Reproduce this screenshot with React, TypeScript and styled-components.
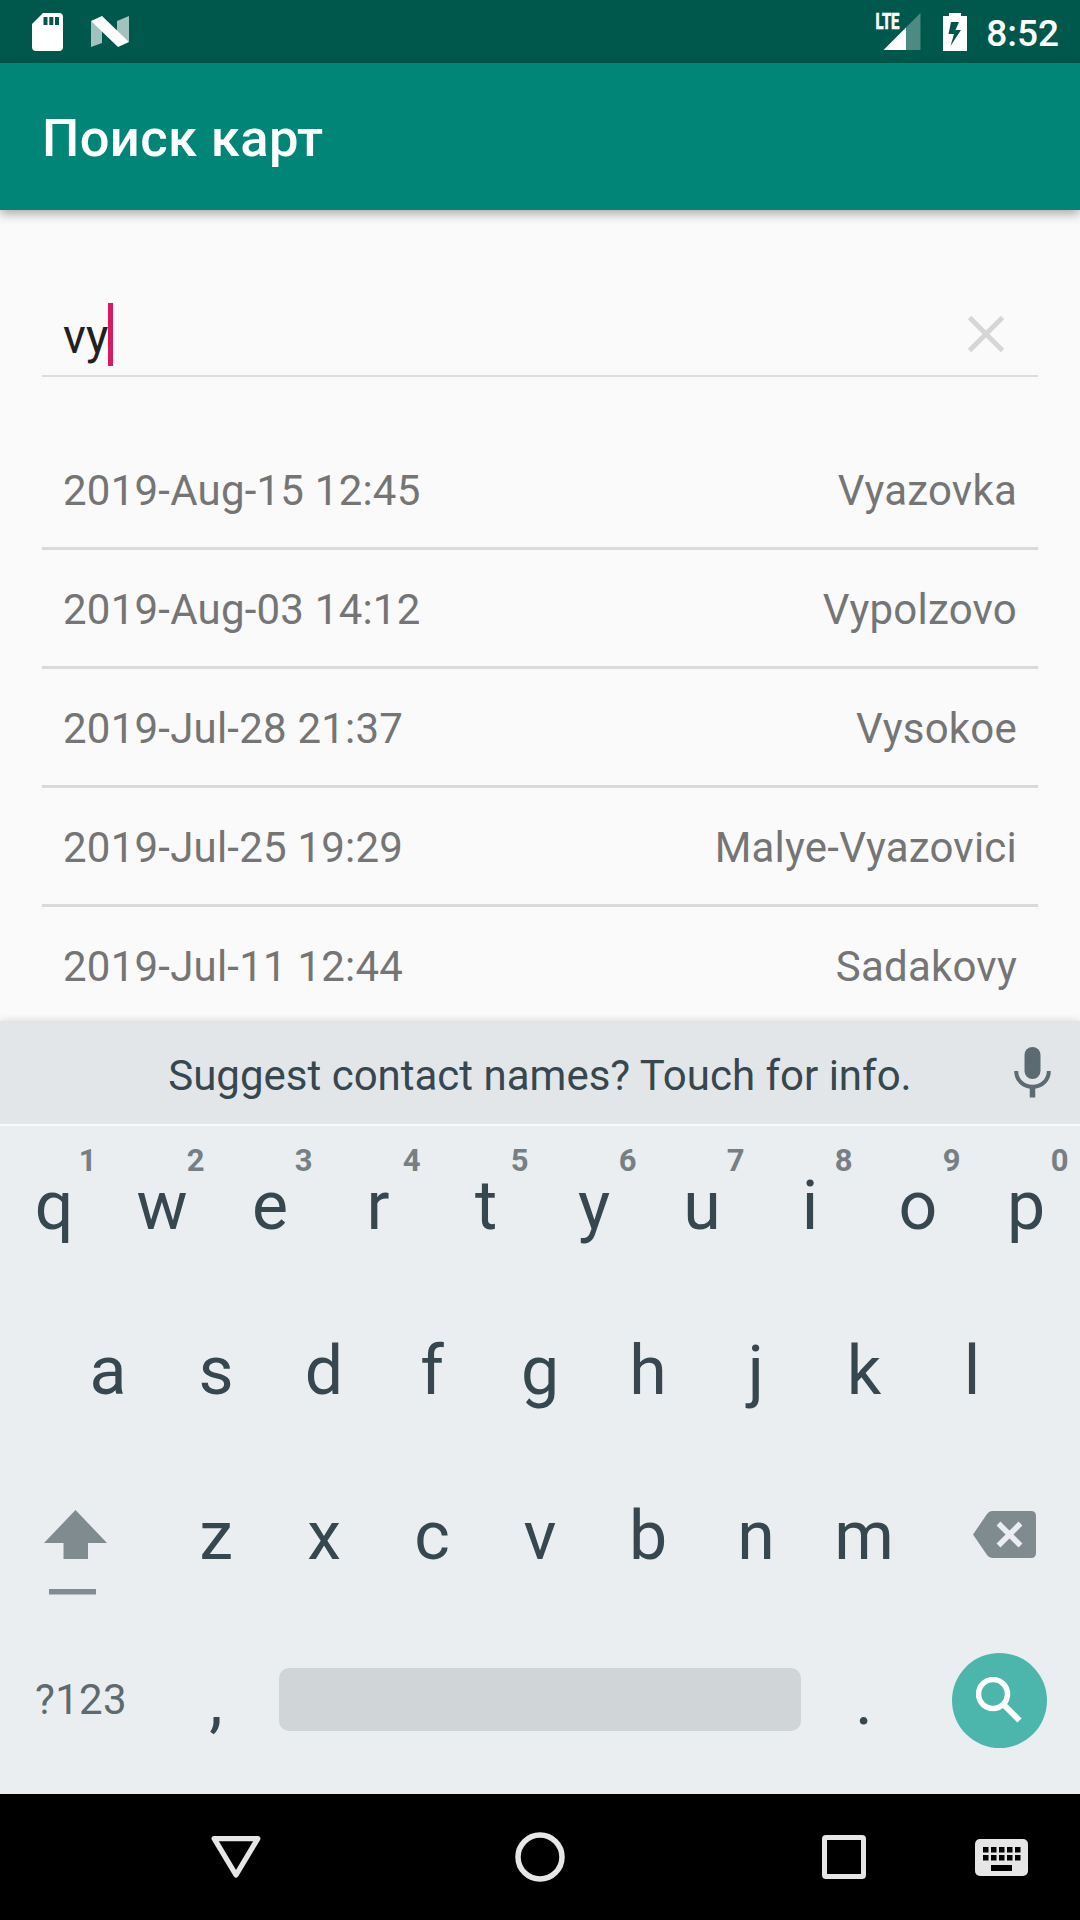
import React from "react";
import styled, { createGlobalStyle } from "styled-components";

const Global = createGlobalStyle`
  * { box-sizing: border-box; }
  body { margin: 0; background: #fafafa; font-family: Roboto, "Noto Sans", sans-serif; }
`;

const Screen = styled.div`
  width: 1080px;
  height: 1920px;
  display: flex;
  flex-direction: column;
  overflow: hidden;
  background: #fafafa;
`;

const StatusBar = styled.header`
  height: 63px;
  flex: none;
  display: flex;
  align-items: center;
  justify-content: space-between;
  padding: 0 21px 0 32px;
  background: #00574b;
`;

const StatusGroup = styled.div<{ $gap: number }>`
  display: flex;
  align-items: center;
  gap: ${(p) => p.$gap}px;
`;

const Clock = styled.span`
  margin-left: -3px;
  font-size: 37px;
  font-weight: 500;
  line-height: 43px;
  color: #fff;
  padding-top: 3px;
`;

const AppBar = styled.div`
  height: 147px;
  flex: none;
  display: flex;
  align-items: center;
  padding: 2px 42px 0;
  background: #008577;
  box-shadow: 0 4px 10px rgba(0, 0, 0, 0.32);
  z-index: 1;
`;

const Title = styled.h1`
  margin: 0;
  font-size: 52.5px;
  font-weight: 500;
  line-height: 62px;
  letter-spacing: 0.38px;
  color: #fff;
`;

const Content = styled.main`
  height: 811px;
  flex: none;
  padding: 74px 42px 0;
  overflow: hidden;
`;

const SearchField = styled.div`
  height: 93px;
  display: flex;
  align-items: flex-end;
  justify-content: space-between;
  padding: 0 33px 9px 21px;
  border-bottom: 2px solid #dedede;
`;

const Query = styled.div`
  display: flex;
  align-items: center;
  height: 63px;
  font-size: 47.25px;
  color: #212121;
`;

const QueryText = styled.span`
  line-height: 50px;
  padding-top: 5px;
`;

const Caret = styled.span`
  width: 5px;
  height: 63px;
  background: #d81b60;
`;

const ClearIcon = styled.svg`
  margin-bottom: 13px;
`;

const List = styled.ul`
  list-style: none;
  margin: 0;
  padding: 54px 0 0;
`;

const Row = styled.li`
  height: 119px;
  display: flex;
  align-items: center;
  justify-content: space-between;
  padding: 3px 21px 0;
  border-bottom: 3px solid #dadada;
  font-size: 42px;
  line-height: 56px;
  letter-spacing: 0.22px;
  color: #757575;
`;

const Keyboard = styled.section`
  height: 773px;
  flex: none;
  position: relative;
  background: #ebeef1;
  box-shadow: 0 -2px 6px rgba(0, 0, 0, 0.09);
`;

const SuggestionBar = styled.div`
  height: 105px;
  display: grid;
  grid-template-columns: 100px 1fr 100px;
  place-items: center;
  background: #e2e6e9;
  border-bottom: 2px solid #f7fafb;
  color: #37474f;
  font-size: 42px;
  line-height: 50px;
`;

const Suggestion = styled.span`
  grid-column: 2;
  padding-top: 6px;
`;

const MicIcon = styled.svg`
  margin-left: 4px;
`;

const KeyRow = styled.div<{ $inset?: number }>`
  display: flex;
  height: 165px;
  padding: 0 ${(p) => p.$inset ?? 0}px;
`;

const Key = styled.div`
  position: relative;
  width: 108px;
  display: flex;
  justify-content: center;
  padding-top: 40px;
  font-size: 68px;
  line-height: 80px;
  color: #37474f;
`;

const Hint = styled.span`
  position: absolute;
  top: 17px;
  right: 11.5px;
  font-size: 31px;
  line-height: 36px;
  font-weight: 700;
  color: #757f84;
`;

const IconKey = styled.div<{ $pad: string }>`
  width: 162px;
  padding: ${(p) => p.$pad};
`;

const SymbolsKey = styled.div`
  width: 162px;
  padding: 54px 0 0 35px;
  font-size: 42px;
  line-height: 50px;
  letter-spacing: 0.3px;
  color: #5f6a6e;
`;

const SpaceBar = styled.div`
  width: 522px;
  height: 63px;
  margin: 47px 9px 0;
  border-radius: 10px;
  background: #d0d5d8;
`;

const SearchKey = styled.div`
  width: 95px;
  height: 95px;
  margin: 32px 0 0 34px;
  border-radius: 50%;
  background: #4db6ac;
  display: grid;
  place-items: center;
`;

const NavBar = styled.nav`
  height: 126px;
  flex: none;
  display: grid;
  grid-template-columns: 84px 304px 304px 74px 156px 158px;
  background: #000;
  position: relative;
  z-index: 1;
`;

const NavItem = styled.div<{ $column: number }>`
  grid-column: ${(p) => p.$column};
  display: grid;
  place-items: center;
`;

const maps = [
  ["2019-Aug-15 12:45", "Vyazovka"],
  ["2019-Aug-03 14:12", "Vypolzovo"],
  ["2019-Jul-28 21:37", "Vysokoe"],
  ["2019-Jul-25 19:29", "Malye-Vyazovici"],
  ["2019-Jul-11 12:44", "Sadakovy"],
];

export default function App() {
  return (
    <>
      <Global />
      <Screen>
        <StatusBar>
          <StatusGroup $gap={28}>
            <svg width="31" height="38" viewBox="0 0 31 38">
              <path
                fill="#fff"
                fillRule="evenodd"
                d="M11 0H27a4 4 0 0 1 4 4V34a4 4 0 0 1-4 4H4a4 4 0 0 1-4-4V11ZM11.500 4v8h4v-8ZM17.300 4v8h4v-8ZM23 4v8h4v-8Z"
              />
            </svg>
            <svg width="38" height="32" viewBox="0 0 38 32">
              <path fill="#a1c2bd" d="M0 5 11 13V27L0 31ZM26 5 38 0V26L26 17Z" />
              <path fill="#fff" d="M0 5 11 0 38 26 27 31Z" />
            </svg>
          </StatusGroup>
          <StatusGroup $gap={22}>
            <svg width="46" height="49" viewBox="0 -6 46 49">
              <path fill="#4d8a81" d="M45.500 0V37H31V14.500Z" />
              <path fill="#fff" d="M8.500 37 31 14.500V37Z" />
              <text
                x="0.500"
                y="16.200"
                fill="#fff"
                stroke="#fff"
                strokeWidth="0.700"
                fontFamily="Roboto"
                fontWeight="700"
                fontSize="22"
                textLength="24"
                lengthAdjust="spacingAndGlyphs"
              >
                LTE
              </text>
            </svg>
            <svg width="24" height="38" viewBox="0 0 24 38">
              <path
                fill="#fff"
                fillRule="evenodd"
                d="M6 0H18V3H24V38H0V3H6ZM8 9 5.500 21H11L7.500 33 18 17H12.500L16 9Z"
              />
            </svg>
            <Clock>8:52</Clock>
          </StatusGroup>
        </StatusBar>
        <AppBar>
          <Title>Поиск карт</Title>
        </AppBar>
        <Content>
          <SearchField>
            <Query>
              <QueryText>vy</QueryText>
              <Caret />
            </Query>
            <ClearIcon width="38" height="38" viewBox="0 0 38 38">
              <path stroke="#d6d6d6" strokeWidth="4.800" d="M2.500 2.500 35.500 35.500M35.500 2.500 2.500 35.500" />
            </ClearIcon>
          </SearchField>
          <List>
            {maps.map(([date, place]) => (
              <Row key={date}>
                <span>{date}</span>
                <span>{place}</span>
              </Row>
            ))}
          </List>
        </Content>
        <Keyboard>
          <SuggestionBar>
            <Suggestion>Suggest contact names? Touch for info.</Suggestion>
            <MicIcon width="37" height="51" viewBox="0 0 37 51">
              <rect x="10.500" y="0" width="16" height="32" rx="8" fill="#5c6a71" />
              <path
                fill="none"
                stroke="#5c6a71"
                strokeWidth="4"
                d="M2.200 24C2.200 33 9 39.800 18.500 39.800S34.800 33 34.800 24"
              />
              <path stroke="#5c6a71" strokeWidth="5.500" d="M18.500 39V50.500" />
            </MicIcon>
          </SuggestionBar>
          <KeyRow>
            {"qwertyuiop".split("").map((letter, i) => (
              <Key key={letter}>
                {letter}
                <Hint>{(i + 1) % 10}</Hint>
              </Key>
            ))}
          </KeyRow>
          <KeyRow $inset={54}>
            {"asdfghjkl".split("").map((letter) => (
              <Key key={letter}>{letter}</Key>
            ))}
          </KeyRow>
          <KeyRow>
            <IconKey $pad="54px 0 0 44px">
              <svg width="63" height="86" viewBox="0 0 63 86">
                <path fill="#808b8f" d="M31.500 0 63 33H44V49H19.500V33H0Z" />
                <path fill="#808b94" d="M5 79H52V84.500H5Z" />
              </svg>
            </IconKey>
            {"zxcvbnm".split("").map((letter) => (
              <Key key={letter}>{letter}</Key>
            ))}
            <IconKey $pad="55px 0 0 55px">
              <svg width="63" height="48" viewBox="0 0 63 48">
                <path
                  fill="#808b8f"
                  d="M0 23.500 14 3Q16 0 19 0H58Q63 0 63 5V42Q63 47 58 47H19Q16 47 14 44Z"
                />
                <path stroke="#ebeef1" strokeWidth="5.500" d="M25.500 12.500 47.500 34.500M47.500 12.500 25.500 34.500" />
              </svg>
            </IconKey>
          </KeyRow>
          <KeyRow>
            <SymbolsKey>?123</SymbolsKey>
            <Key>,</Key>
            <SpaceBar />
            <Key>.</Key>
            <SearchKey>
              <svg width="47" height="47" viewBox="0 0 47 47">
                <circle cx="17" cy="17" r="14.500" fill="none" stroke="#fff" strokeWidth="5.500" />
                <path stroke="#fff" strokeWidth="6" d="M28 28 43.500 43.500" />
              </svg>
            </SearchKey>
          </KeyRow>
        </Keyboard>
        <NavBar>
          <NavItem $column={2}>
            <svg width="50" height="44" viewBox="0 0 50 44">
              <path
                fill="none"
                stroke="#e6e6e6"
                strokeWidth="5.300"
                strokeLinejoin="round"
                d="M3.200 3.600H46.800L25 40Z"
              />
            </svg>
          </NavItem>
          <NavItem $column={3}>
            <svg width="50" height="50" viewBox="0 0 50 50">
              <circle cx="25" cy="25" r="22" fill="none" stroke="#e6e6e6" strokeWidth="5.500" />
            </svg>
          </NavItem>
          <NavItem $column={5}>
            <svg width="44" height="44" viewBox="0 0 44 44">
              <rect x="2.500" y="2.500" width="39" height="39" rx="1.500" fill="none" stroke="#e6e6e6" strokeWidth="5" />
            </svg>
          </NavItem>
          <NavItem $column={6}>
            <svg width="53" height="37" viewBox="0 0 53 37">
              <rect width="53" height="37" rx="5" fill="#e6e6e6" />
              {[8, 16, 24, 32, 40].map((x) => (
                <path key={x} d={`M${x} 8h5.500v5.500h-5.500ZM${x} 16h5.500v5.500h-5.500Z`} />
              ))}
              <path d="M16 26H37V32H16Z" />
            </svg>
          </NavItem>
        </NavBar>
      </Screen>
    </>
  );
}
